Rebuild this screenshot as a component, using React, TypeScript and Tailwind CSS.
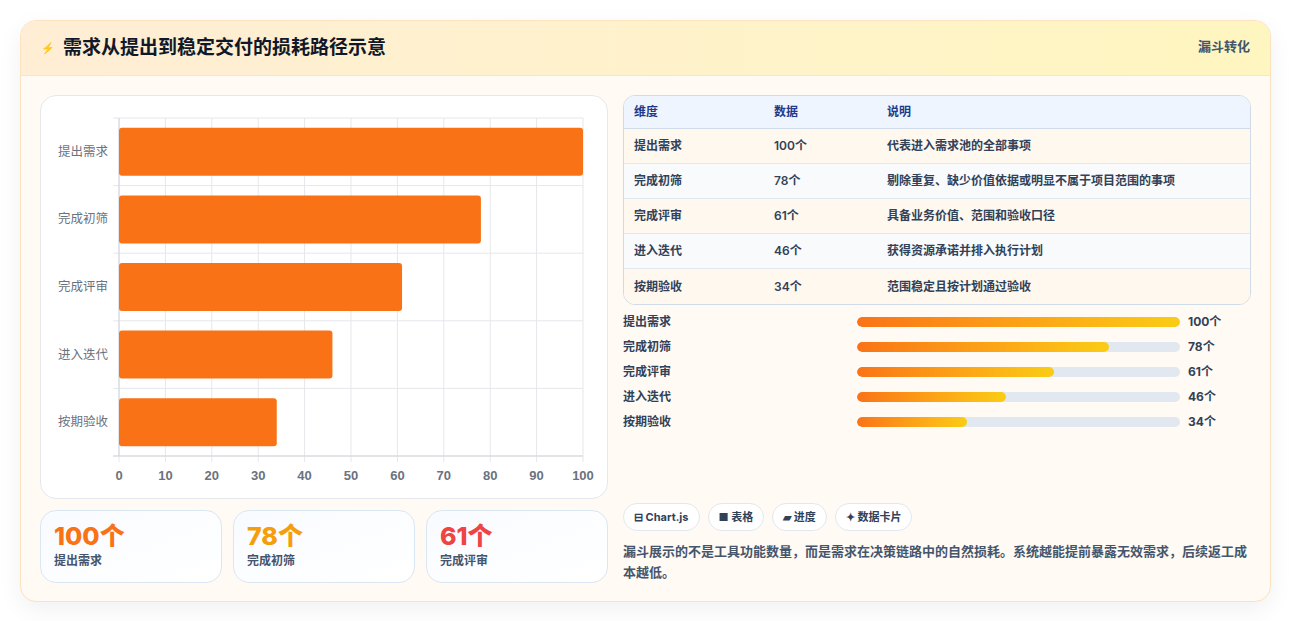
import React from "react";

const data = [
  { n: "提出需求", v: 100, d: "代表进入需求池的全部事项" },
  { n: "完成初筛", v: 78, d: "剔除重复、缺少价值依据或明显不属于项目范围的事项" },
  { n: "完成评审", v: 61, d: "具备业务价值、范围和验收口径" },
  { n: "进入迭代", v: 46, d: "获得资源承诺并排入执行计划" },
  { n: "按期验收", v: 34, d: "范围稳定且按计划通过验收" },
];

function Chart() {
  const x0 = 78, w = 464, y0 = 22, y1 = 360;
  const rowH = (y1 - y0) / 5;
  return (
    <svg width="566" height="401" className="block">
      {Array.from({ length: 11 }).map((_, i) => (
        <line key={i} x1={x0 + i * w / 10} x2={x0 + i * w / 10} y1={y0} y2={y1 + 6} stroke="#e5e7eb" />
      ))}
      {Array.from({ length: 6 }).map((_, i) => (
        <line key={i} x1={x0 - 6} x2={x0 + w} y1={y0 + i * rowH} y2={y0 + i * rowH} stroke="#e5e7eb" />
      ))}
      <line x1={x0 - 6} x2={x0 + w} y1={y1} y2={y1} stroke="#d1d5db" />
      <line x1={x0} x2={x0} y1={y0} y2={y1} stroke="#d1d5db" />
      {data.map((r, i) => {
        const cy = y0 + rowH * i + rowH / 2;
        return (
          <g key={r.n}>
            <rect x={x0} y={cy - 24} width={(w * r.v) / 100} height={48} rx={3} fill="#f97316" />
            <text x={x0 - 11} y={cy + 4} textAnchor="end" fontSize="12.5" fill="#6b7280" fontFamily="'Noto Sans CJK SC', sans-serif">{r.n}</text>
          </g>
        );
      })}
      {Array.from({ length: 11 }).map((_, i) => (
        <text key={i} x={x0 + i * w / 10} y={384} textAnchor="middle" fontSize="13" fontWeight="600" fill="#6b7280" fontFamily="'Liberation Sans', sans-serif">{i * 10}</text>
      ))}
    </svg>
  );
}

export default function App() {
  return (
    <div className="min-h-screen bg-white p-5 pb-0" style={{ fontFamily: "Inter, 'Noto Sans CJK SC', sans-serif" }}>
      <div className="rounded-2xl border border-[#fde2bf] bg-[#fffaf3] shadow-[0_8px_24px_rgba(0,0,0,0.06)] overflow-hidden">
        <div className="h-[55px] flex items-center justify-between pl-[20px] pr-[20px] border-b border-[#f5e6d3] bg-gradient-to-r from-[#ffedd5] to-[#fef6c0]">
          <div className="flex items-center gap-2">
            <span className="text-[11px] text-blue-600">⚡</span>
            <h1 className="text-[19px] font-bold text-[#111827]">需求从提出到稳定交付的损耗路径示意</h1>
          </div>
          <span className="text-[13px] font-bold text-slate-600 self-start mt-[16px]">漏斗转化</span>
        </div>
        <div className="flex gap-[15px] p-[19px] pb-[18px]">
          <div className="w-[568px] flex flex-col gap-[11px]">
            <div className="h-[404px] rounded-2xl border border-[#e5e7eb] bg-white">
              <Chart />
            </div>
            <div className="grid grid-cols-3 gap-[11px]">
              {[["100个", "text-[#f97316]", "提出需求"], ["78个", "text-[#f59e0b]", "完成初筛"], ["61个", "text-[#ef4444]", "完成评审"]].map(([v, c, l]) => (
                <div key={l} className="h-[73px] rounded-2xl border border-[#dbe6f3] bg-gradient-to-br from-[#f8fbff] to-white px-[13px] pt-[10px]">
                  <div className={`text-[25px] leading-[30px] font-extrabold ${c}`}>{v}</div>
                  <div className="text-[12px] font-semibold text-slate-600 mt-[1px]">{l}</div>
                </div>
              ))}
            </div>
          </div>
          <div className="flex-1 flex flex-col">
            <div className="rounded-xl border border-[#cfdbe8] overflow-hidden text-[12px] font-semibold text-slate-700">
              <div className="flex h-[33px] items-center bg-[#eef5ff] border-b border-[#cfdbe8] text-[#1e3a8a]">
                <div className="w-[150px] pl-[10px]">维度</div>
                <div className="w-[113px]">数据</div>
                <div>说明</div>
              </div>
              {data.map((r, i) => (
                <div key={r.n} className={`flex h-[35px] items-center ${i < 4 ? "border-b border-[#e2e8f0]" : ""} ${i % 2 ? "bg-[#f8fafc]" : "bg-[#fff8ef]"}`}>
                  <div className="w-[150px] pl-[10px]">{r.n}</div>
                  <div className="w-[113px]">{r.v}个</div>
                  <div>{r.d}</div>
                </div>
              ))}
            </div>
            <div className="mt-[10px] flex flex-col gap-[11px]">
              {data.map((r) => (
                <div key={r.n} className="flex items-center h-[14px] text-[12px] font-bold text-slate-700">
                  <div className="w-[234px]">{r.n}</div>
                  <div className="w-[323px] h-[10px] rounded-full bg-[#e2e8f0] overflow-hidden">
                    <div className="h-full rounded-full bg-gradient-to-r from-[#f97316] to-[#facc15]" style={{ width: `${r.v}%` }} />
                  </div>
                  <div className="ml-[8px]">{r.v}个</div>
                </div>
              ))}
            </div>
            <div className="mt-auto flex gap-[8px]">
              {["⊟ Chart.js", "■ 表格", "▰ 进度", "✦ 数据卡片"].map((t) => (
                <span key={t} className="h-[28px] px-[10px] flex items-center rounded-full border border-[#e2e8f0] bg-white text-[11px] font-bold text-slate-700">{t}</span>
              ))}
            </div>
            <p className="mt-[10px] text-[13px] leading-[21px] font-semibold text-slate-600">漏斗展示的不是工具功能数量，而是需求在决策链路中的自然损耗。系统越能提前暴露无效需求，后续返工成本越低。</p>
          </div>
        </div>
      </div>
    </div>
  );
}
